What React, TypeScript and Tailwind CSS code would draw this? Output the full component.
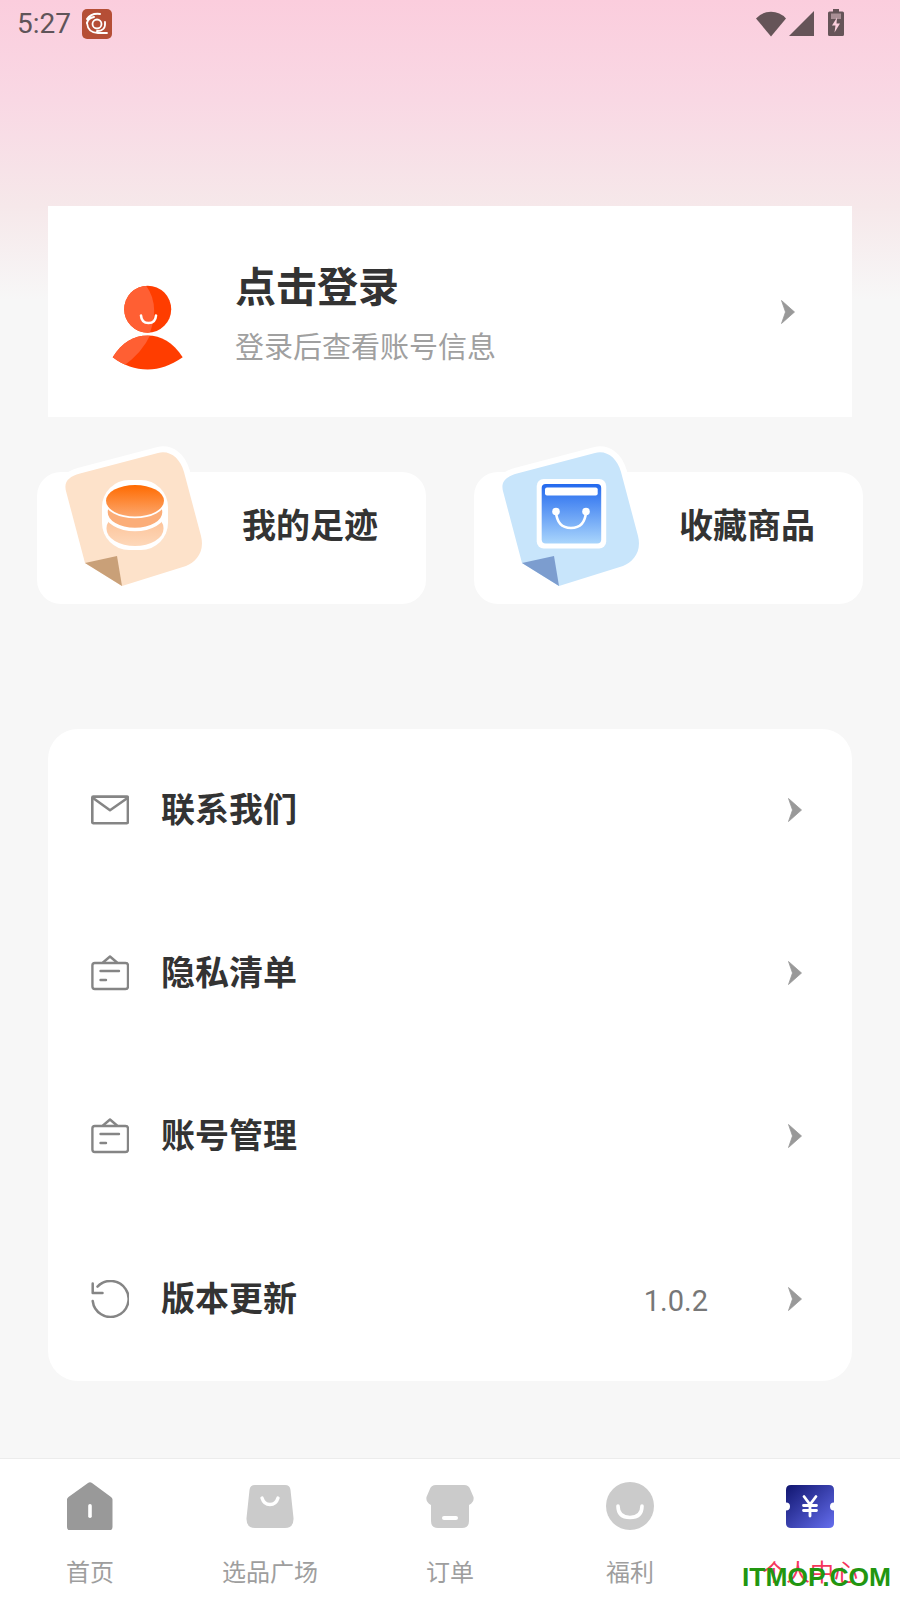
import React from "react";

function Chevron({ className }: { className: string }) {
  return (
    <svg viewBox="0 0 14 24" className={className}>
      <path d="M0.5 0.5 L13.5 12 L0.5 23.5 L4.5 12 Z" fill="#999999" stroke="#999999" strokeWidth="0.8" strokeLinejoin="round" />
    </svg>
  );
}

function MailIcon() {
  return (
    <svg viewBox="0 0 38 38" className="w-[38px] h-[38px]" fill="none" stroke="#858585" strokeWidth="2.6" strokeLinejoin="round">
      <rect x="1.3" y="5.6" width="35.6" height="26.6" rx="1" />
      <path d="M2 7 L19 19.2 L36.5 7" />
    </svg>
  );
}

function BoxIcon() {
  return (
    <svg viewBox="0 0 38 38" className="w-[38px] h-[38px]" fill="none" stroke="#858585" strokeWidth="2.4" strokeLinejoin="round" strokeLinecap="round">
      <rect x="1.4" y="9" width="35.6" height="26" rx="2.5" />
      <path d="M12 8.5 L19 2.5 L26 8.5" />
      <path d="M9.5 17 L28 17" />
      <path d="M9.5 26 L15 26" />
    </svg>
  );
}

function RefreshIcon() {
  return (
    <svg viewBox="0 0 38 38" className="w-[38px] h-[38px]" fill="none" stroke="#858585" strokeWidth="2.5" strokeLinecap="round" strokeLinejoin="round">
      <path d="M6.5 6.6 A18 18 0 1 1 1.7 21" />
      <path d="M1.7 3.5 L1.7 13 L11.5 13" />
    </svg>
  );
}

function MenuRow({ icon, label, value }: { icon: React.ReactNode; label: string; value?: string }) {
  return (
    <div className="h-[163px] flex items-center pl-[43px] pr-[50px] pb-[2px]">
      {icon}
      <span className="ml-[32px] text-[34px] leading-[48px] font-bold text-[#333333]">{label}</span>
      <span className="flex-1" />
      {value ? <span className="text-[29px] text-[#777777] mr-[80px] mt-[6px]">{value}</span> : null}
      <Chevron className="w-[14px] h-[24px]" />
    </div>
  );
}

function Sticker({ box, dx, base, fold, children }: { box: string; dx: number; base: string; fold: string; children: React.ReactNode }) {
  return (
    <svg viewBox={box} className="absolute left-[23px] top-[-32px] w-[150px] h-[150px]">
      <g transform={`translate(${dx} 0)`}>
        <path
          d="M85 563 L66.5 493 C63 482 68 477 80 473.5 L158 453 C170 450 180 458 184 472 L201 536 C205 552 196 562 186 566 L122 586 Z"
          fill={base}
          stroke="#ffffff"
          strokeWidth="12"
          strokeLinejoin="round"
          paintOrder="stroke"
        />
        <path d="M85 563 L117 556 L122 586 Z" fill={fold} />
      </g>
      {children}
    </svg>
  );
}

function CoinSticker() {
  return (
    <Sticker box="60 440 150 150" dx={0} base="#fde2ca" fold="#c9a078">
      <defs>
        <linearGradient id="coinTop" x1="0" y1="0" x2="0" y2="1">
          <stop offset="0" stopColor="#ff6a00" />
          <stop offset="1" stopColor="#fca76d" />
        </linearGradient>
        <linearGradient id="coinLow" x1="0" y1="0" x2="0" y2="1">
          <stop offset="0" stopColor="#fdbb8c" />
          <stop offset="1" stopColor="#fdd8ba" />
        </linearGradient>
      </defs>
      <rect x="102" y="480" width="66" height="70" rx="27" fill="#ffffff" />
      <rect x="106.5" y="511" width="57" height="35" rx="28.5" ry="17" fill="url(#coinLow)" />
      <rect x="106" y="494.5" width="58" height="35" rx="29" ry="17" fill="#fbad78" stroke="#ffffff" strokeWidth="3.5" />
      <rect x="106" y="485" width="58" height="31.5" rx="29" ry="15.7" fill="url(#coinTop)" stroke="#ffffff" strokeWidth="3.5" paintOrder="stroke" />
    </Sticker>
  );
}

function BagSticker() {
  return (
    <Sticker box="497 440 150 150" dx={437} base="#c8e5fb" fold="#7c9dcf">
      <defs>
        <linearGradient id="bagFill" x1="0" y1="0" x2="0" y2="1">
          <stop offset="0" stopColor="#2369ee" />
          <stop offset="1" stopColor="#a9d5fc" />
        </linearGradient>
      </defs>
      <rect x="536.7" y="479" width="69.5" height="69.5" rx="7" fill="#ffffff" />
      <rect x="541.7" y="484" width="59.5" height="59.5" rx="4" fill="url(#bagFill)" />
      <rect x="545" y="487.5" width="52.7" height="8" rx="2" fill="#ffffff" />
      <path d="M556 511.5 Q557 528 571 528 Q585 528 586 511.5" fill="none" stroke="#ffffff" strokeWidth="2.6" />
      <circle cx="556" cy="511.5" r="3.8" fill="#ffffff" />
      <circle cx="586" cy="511.5" r="3.8" fill="#ffffff" />
    </Sticker>
  );
}

function QuickCard({ sticker, label }: { sticker: React.ReactNode; label: string }) {
  return (
    <div className="relative w-[389px] h-[132px] rounded-[24px] bg-white flex items-center pl-[205px] pb-[25px]">
      {sticker}
      <span className="text-[34px] leading-[48px] font-bold text-[#333333]">{label}</span>
    </div>
  );
}

function NavItem({ icon, label, active }: { icon: React.ReactNode; label: string; active?: boolean }) {
  return (
    <div className="flex flex-col items-center">
      {icon}
      <span className={`mt-[26px] text-[24px] leading-[34px] ${active ? "text-[#f5365c]" : "text-[#9e9e9e]"}`}>{label}</span>
    </div>
  );
}

export default function App() {
  return (
    <div className="relative w-[900px] h-[1600px] overflow-hidden flex flex-col bg-[linear-gradient(180deg,#fbcddd_0px,#f9d8e4_100px,#f6e8ea_206px,#f7f7f7_300px)] font-['Roboto','Noto_Sans_CJK_SC',sans-serif]">
      <div className="h-[206px] pt-[9px] pl-[17px] pr-[56px] flex items-start justify-between">
        <div className="flex items-center h-[30px] gap-[11px]">
          <span className="text-[28px] leading-[30px] text-[#5f5459]">5:27</span>
          <svg viewBox="0 0 30 30" className="w-[30px] h-[30px]">
            <rect width="30" height="30" rx="5" fill="#b54e36" />
            <path d="M5 10 Q9 4 18 5 M5 14 Q6 9 12 8" fill="none" stroke="#ffffff" strokeWidth="2" strokeLinecap="round" />
            <circle cx="15" cy="15" r="4.5" fill="none" stroke="#ffffff" strokeWidth="1.8" />
            <path d="M5 14 Q6 24 16 24 L25 24 M15 22 Q24 22 23 13" fill="none" stroke="#ffffff" strokeWidth="1.8" strokeLinecap="round" />
          </svg>
        </div>
        <div className="flex items-start h-[30px]">
          <svg viewBox="0 0 30 26" className="w-[30px] h-[26px] mt-[2px]">
            <path d="M15 25.5 L0 7.5 Q6 0.8 15 0.8 Q24 0.8 30 7.5 Z" fill="#655458" />
          </svg>
          <svg viewBox="0 0 25 25" className="ml-[3px] w-[25px] h-[25px] mt-[2px]">
            <path d="M0 25 L25 0 L25 25 Z" fill="#655458" />
          </svg>
          <svg viewBox="0 0 16 27" className="ml-[14px] w-[16px] h-[27px]">
            <path d="M5 0 L11 0 L11 2.5 L14.5 2.5 Q16 2.5 16 4 L16 25.5 Q16 27 14.5 27 L1.5 27 Q0 27 0 25.5 L0 4 Q0 2.5 1.5 2.5 L5 2.5 Z" fill="#655458" />
            <path d="M3 4.5 L13 4.5 L13 10 L3 10 Z" fill="#a98f95" />
            <path d="M9 8.5 L4 16.5 L7.5 16.5 L6.5 23.5 L12 14.5 L8.5 14.5 Z" fill="#fbcfdc" />
          </svg>
        </div>
      </div>

      <div className="mx-[48px] h-[211px] bg-white flex items-center pl-[48px] pr-[57px]">
        <svg viewBox="96 251.5 104 120" className="w-[104px] h-[120px] shrink-0">
          <defs>
            <clipPath id="headClip">
              <circle cx="147.7" cy="308.7" r="23.5" />
            </clipPath>
            <clipPath id="bodyClip">
              <path d="M112.7 356.7 C122 342 134 335 147.7 335 C161 335 173 342 182.7 356.7 C170 365 160 369 147.7 369 C135 369 124 365 112.7 356.7 Z" />
            </clipPath>
          </defs>
          <circle cx="147.7" cy="308.7" r="23.5" fill="#ff3d00" />
          <path d="M120 280 L146 285 Q160 304 150 332 L120 335 Z" fill="#ff5f33" clipPath="url(#headClip)" />
          <path d="M112.7 356.7 C122 342 134 335 147.7 335 C161 335 173 342 182.7 356.7 C170 365 160 369 147.7 369 C135 369 124 365 112.7 356.7 Z" fill="#ff3d00" />
          <path d="M105 330 L152 330 Q145 350 123 366 L105 366 Z" fill="#ff5f33" clipPath="url(#bodyClip)" />
          <path d="M141 315 Q141.5 322.5 148.5 322.5 Q155.5 322.5 156 315" fill="none" stroke="#ffffff" strokeWidth="2.6" strokeLinecap="round" />
        </svg>
        <div className="ml-[35px] flex-1 flex flex-col mt-[5px]">
          <span className="text-[41px] leading-[56px] font-bold text-[#333333]">点击登录</span>
          <span className="mt-[12px] text-[29px] leading-[40px] text-[#a0a0a0]">登录后查看账号信息</span>
        </div>
        <Chevron className="w-[14px] h-[24px]" />
      </div>

      <div className="mt-[55px] px-[37px] flex justify-between">
        <QuickCard sticker={<CoinSticker />} label="我的足迹" />
        <QuickCard sticker={<BagSticker />} label="收藏商品" />
      </div>

      <div className="mt-[125px] mx-[48px] h-[652px] rounded-[30px] bg-white flex flex-col">
        <MenuRow icon={<MailIcon />} label="联系我们" />
        <MenuRow icon={<BoxIcon />} label="隐私清单" />
        <MenuRow icon={<BoxIcon />} label="账号管理" />
        <MenuRow icon={<RefreshIcon />} label="版本更新" value="1.0.2" />
      </div>

      <div className="mt-auto h-[142px] bg-white border-t border-[#ececec] pt-[23px] grid grid-cols-5">
        <NavItem
          label="首页"
          icon={
            <svg viewBox="0 0 48 48" className="w-[48px] h-[48px]">
              <path d="M1 17.5 Q1 16 2.5 15 L22 1 Q24 -0.3 26 1 L45 15 Q46.5 16 46.5 17.5 L46.5 45 Q46.5 48.5 43 48.5 L4.5 48.5 Q1 48.5 1 45 Z" fill="#999999" />
              <rect x="22.2" y="22" width="3.6" height="14" rx="1.8" fill="#ffffff" />
            </svg>
          }
        />
        <NavItem
          label="选品广场"
          icon={
            <svg viewBox="0 0 48 48" className="w-[48px] h-[48px]">
              <path d="M9 3 L39 3 Q44 3 44.5 8 L47.5 36 Q48 46 39 46 L9 46 Q0 46 0.5 36 L3.5 8 Q4 3 9 3 Z" fill="#cbcbcb" />
              <path d="M16 16 Q18 22.5 24 22.5 Q30 22.5 32 16" fill="none" stroke="#ffffff" strokeWidth="3.4" strokeLinecap="round" />
            </svg>
          }
        />
        <NavItem
          label="订单"
          icon={
            <svg viewBox="0 0 48 48" className="w-[48px] h-[48px]">
              <path d="M10 3 L38 3 Q43 3 44.5 8 L47.5 15 Q48.5 20 43 23 L43 39 Q43 46 36 46 L12 46 Q5 46 5 39 L5 23 Q-0.5 20 0.5 15 L3.5 8 Q5 3 10 3 Z" fill="#cbcbcb" />
              <rect x="16" y="34" width="16" height="4" rx="2" fill="#ffffff" />
            </svg>
          }
        />
        <NavItem
          label="福利"
          icon={
            <svg viewBox="0 0 48 48" className="w-[48px] h-[48px]">
              <circle cx="24" cy="24" r="24" fill="#cbcbcb" />
              <path d="M12 24 Q12 35.5 24 35.5 Q36 35.5 36 24" fill="none" stroke="#ffffff" strokeWidth="3.6" strokeLinecap="round" />
            </svg>
          }
        />
        <NavItem
          active
          label="个人中心"
          icon={
            <svg viewBox="0 0 48 48" className="w-[48px] h-[48px]">
              <defs>
                <linearGradient id="ticket" x1="0" y1="0" x2="1" y2="1">
                  <stop offset="0" stopColor="#10156f" />
                  <stop offset="1" stopColor="#656eee" />
                </linearGradient>
              </defs>
              <path d="M5 3 L43 3 Q48 3 48 8 L48 20.5 A4 4 0 0 0 48 28.5 L48 41 Q48 46 43 46 L5 46 Q0 46 0 41 L0 28.5 A4 4 0 0 0 0 20.5 L0 8 Q0 3 5 3 Z" fill="url(#ticket)" />
              <path d="M18 14.5 L24 22.5 L30 14.5 M17.5 23.5 L30.5 23.5 M17.5 28.5 L30.5 28.5 M24 22.5 L24 34" fill="none" stroke="#ffffff" strokeWidth="2.8" strokeLinecap="round" />
            </svg>
          }
        />
      </div>

      <span className="absolute left-[742px] top-[1562px] text-[26.4px] leading-[30px] font-bold text-[#229610] font-['Liberation_Sans',sans-serif]">ITMOP.COM</span>
    </div>
  );
}
